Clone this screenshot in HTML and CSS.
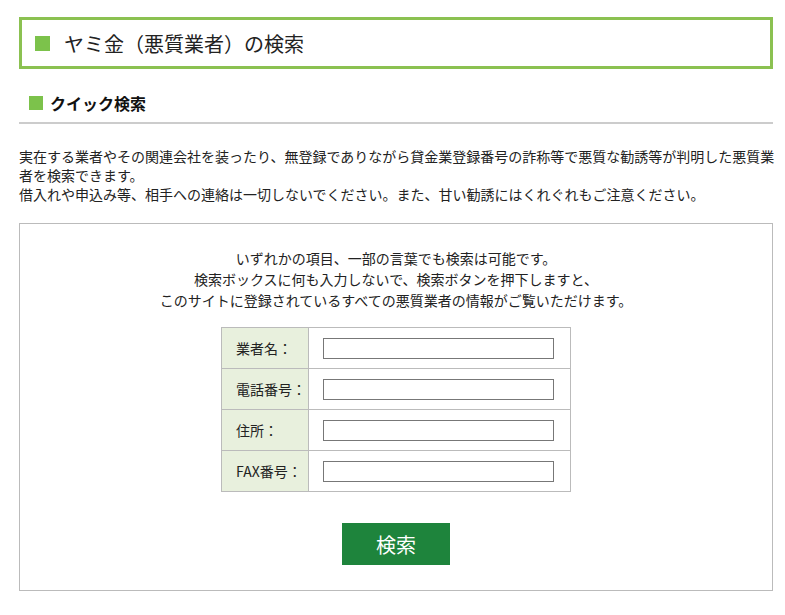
FILE: index.html
```html
<!DOCTYPE html>
<html lang="ja">
<head>
  <meta charset="UTF-8">
  <title>ヤミ金（悪質業者）の検索</title>
  <link rel="stylesheet" href="styles.css">
</head>
<body>
<div class="page">

  <!-- Title -->
  <h1 class="pageTitle"><span class="mark"></span>ヤミ金（悪質業者）の検索</h1>

  <!-- Quick search -->
  <h2 class="subTitle"><span class="markSmall"></span>クイック検索</h2>

  <p class="intro">実在する業者やその関連会社を装ったり、無登録でありながら貸金業登録番号の詐称等で悪質な勧誘等が判明した悪質業者を検索できます。<br>
  借入れや申込み等、相手への連絡は一切しないでください。また、甘い勧誘にはくれぐれもご注意ください。</p>

  <form class="searchBox">
    <p class="note">いずれかの項目、一部の言葉でも検索は可能です。<br>
    検索ボックスに何も入力しないで、検索ボタンを押下しますと、<br>
    このサイトに登録されているすべての悪質業者の情報がご覧いただけます。</p>

    <table class="searchTable">
      <tr>
        <th>業者名：</th>
        <td><input type="text" name="name"></td>
      </tr>
      <tr>
        <th>電話番号：</th>
        <td><input type="text" name="tel"></td>
      </tr>
      <tr>
        <th>住所：</th>
        <td><input type="text" name="address"></td>
      </tr>
      <tr>
        <th>FAX番号：</th>
        <td><input type="text" name="fax"></td>
      </tr>
    </table>

    <div class="buttonRow">
      <button type="submit" class="searchBtn">検索</button>
    </div>
  </form>

</div>
</body>
</html>
```

FILE: styles.css
```css
/* Base */
body { margin: 0; font-family: "Noto Sans CJK JP", "Noto Sans", sans-serif; color: #222; background: #fff; }
.page { width: 754px; margin: 0 0 0 19px; padding-top: 17px; }

/* Title */
.pageTitle { display: flex; align-items: center; gap: 14px; height: 46px; margin: 0; padding-left: 13px; border: 3px solid #8bc151; font-size: 20px; font-weight: normal; color: #222; }
.mark { width: 15px; height: 15px; background: #7cc24b; }

/* Sub title */
.subTitle { display: flex; align-items: center; gap: 7px; margin: 24px 0 0; padding: 0 0 9px 10px; border-bottom: 2px solid #cccccc; font-size: 16px; line-height: 20px; font-weight: bold; color: #111; }
.markSmall { width: 14px; height: 14px; background: #7cc24b; }

/* Intro text */
.intro { width: 760px; margin: 23px 0 0; font-size: 14px; line-height: 19px; }

/* Search box */
.searchBox { margin-top: 19px; padding: 24px 0 25px; border: 1px solid #bbbbbb; text-align: center; }
.note { margin: 0 0 16px; font-size: 14px; line-height: 21px; }
.searchTable { margin: 0 auto; border-collapse: collapse; border: 1px solid #bbbbbb; font-size: 14px; }
.searchTable th, .searchTable td { height: 40px; padding: 0; border: 1px solid #bbbbbb; }
.searchTable th { width: 72px; padding-left: 14px; background: #e8f0dd; text-align: left; font-weight: normal; }
.searchTable td { width: 247px; padding-left: 14px; text-align: left; }
.searchTable input { display: block; width: 231px; height: 21px; box-sizing: border-box; margin: 0; border: 1px solid #777; }

.buttonRow { margin-top: 31px; }
.searchBtn { width: 108px; height: 42px; border: none; background: #1e843c; color: #fff; font-family: inherit; font-size: 20px; }
```
